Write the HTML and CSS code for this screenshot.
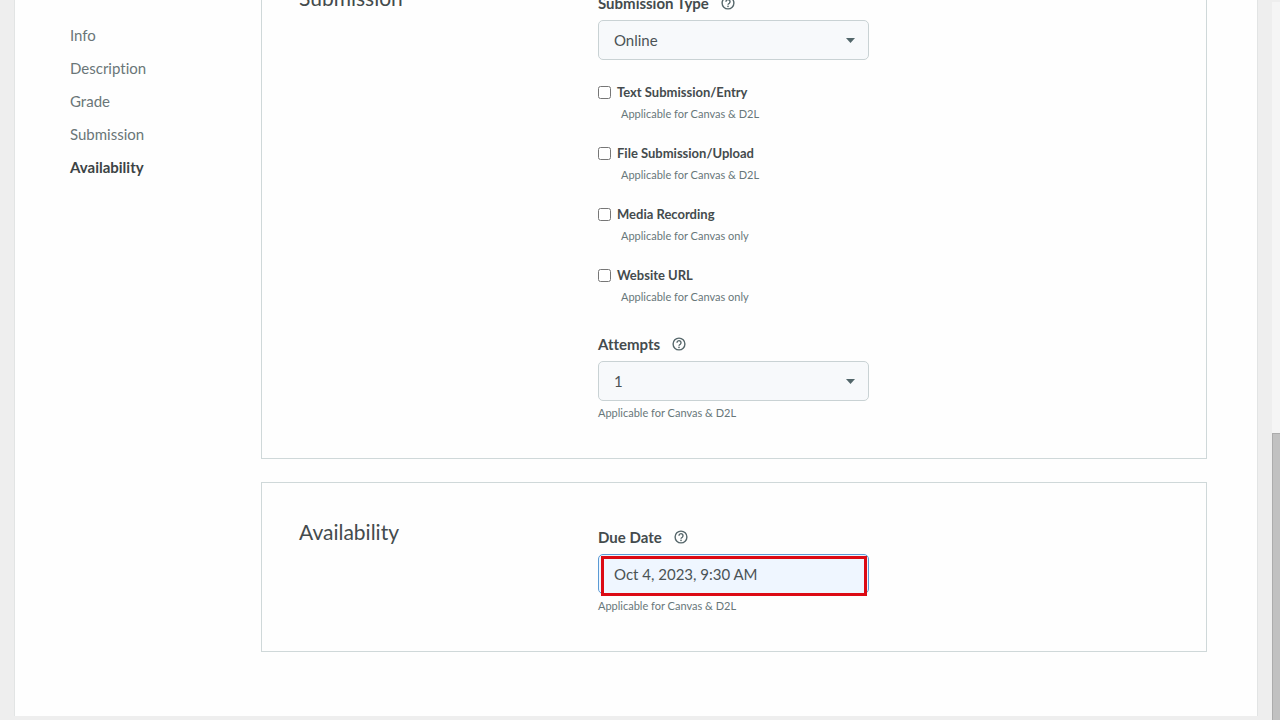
FILE: index.html
```html
<!DOCTYPE html>
<html lang="en">
<head>
	<meta charset="utf-8">
	<title>Assignment</title>
	<link rel="stylesheet" href="styles.css">
</head>
<body>
	<!-- help icon shared by the field labels -->
	<svg class="sprite" aria-hidden="true">
		<symbol id="help" viewBox="0 0 14 14">
			<circle cx="7" cy="7" r="5.9" fill="none" stroke="currentColor" stroke-width="1.4"/>
			<path d="M5 5.7a2 2 0 1 1 3.3 1.5C7.5 7.8 7 8 7 8.8" fill="none" stroke="currentColor" stroke-width="1.4"/>
			<circle cx="7" cy="10.4" r="0.8" fill="currentColor"/>
		</symbol>
	</svg>
	<div class="view">
		<main class="sheet">
			<nav class="sidenav">
				<a href="#info">Info</a>
				<a href="#description">Description</a>
				<a href="#grade">Grade</a>
				<a href="#submission">Submission</a>
				<a href="#availability" class="active">Availability</a>
			</nav>
			<form class="sections">
				<section class="panel" id="submission">
					<h2>Submission</h2>
					<div class="fields">
						<div class="field">
							<div class="field-label">
								<label for="type">Submission Type</label>
								<button type="button" class="help" aria-label="Help"><svg><use href="#help"/></svg></button>
							</div>
							<select id="type" class="control">
								<option>Online</option>
							</select>
						</div>
						<div class="checks">
							<div class="check">
								<label><input type="checkbox">Text Submission/Entry</label>
								<p class="hint">Applicable for Canvas &amp; D2L</p>
							</div>
							<div class="check">
								<label><input type="checkbox">File Submission/Upload</label>
								<p class="hint">Applicable for Canvas &amp; D2L</p>
							</div>
							<div class="check">
								<label><input type="checkbox">Media Recording</label>
								<p class="hint">Applicable for Canvas only</p>
							</div>
							<div class="check">
								<label><input type="checkbox">Website URL</label>
								<p class="hint">Applicable for Canvas only</p>
							</div>
						</div>
						<div class="field">
							<div class="field-label">
								<label for="attempts">Attempts</label>
								<button type="button" class="help" aria-label="Help"><svg><use href="#help"/></svg></button>
							</div>
							<select id="attempts" class="control">
								<option>1</option>
							</select>
							<p class="hint">Applicable for Canvas &amp; D2L</p>
						</div>
					</div>
				</section>
				<section class="panel" id="availability">
					<h2>Availability</h2>
					<div class="fields">
						<div class="field">
							<div class="field-label">
								<label for="due">Due Date</label>
								<button type="button" class="help" aria-label="Help"><svg><use href="#help"/></svg></button>
							</div>
							<div class="marked">
								<input type="text" id="due" class="control current" value="Oct 4, 2023, 9:30 AM">
							</div>
							<p class="hint">Applicable for Canvas &amp; D2L</p>
						</div>
					</div>
				</section>
			</form>
		</main>
		<div class="scrollbar"><div class="thumb"></div></div>
	</div>
</body>
</html>
```

FILE: styles.css
```css
* {
	box-sizing: border-box;
	margin: 0;
	padding: 0;
}

body {
	background-color: #eee;
	color: #444b4d;
	font-family: Lato, "Liberation Sans", sans-serif;
	font-size: 15px;
	font-variant-ligatures: none;
	line-height: 20px;
}

.sprite {
	display: none;
}

.view {
	display: flex;
	height: 100vh;
	overflow: hidden;
}

.sheet {
	flex: 1;
	display: flex;
	align-items: flex-start;
	margin: 0 14px 4px 14px;
	padding-right: 50px;
	border: 1px solid #e2e4e4;
	border-width: 0 1px;
	background-color: #fefefe;
}

.sidenav {
	display: flex;
	flex-direction: column;
	gap: 13px;
	width: 246px;
	padding: 25px 0 0 55px;
}

.sidenav a {
	color: #6a7678;
	text-decoration: none;
}

.sidenav .active {
	color: #3c4345;
	font-weight: bold;
}

.sections {
	flex: 1;
	display: flex;
	flex-direction: column;
	gap: 23px;
	/* scrolled part way into the submission panel */
	margin-top: -52px;
}

.panel {
	display: grid;
	grid-template-columns: 299px 1fr;
	padding: 44px 37px 37px;
	border: 1px solid #cfd8d9;
}

.panel h2 {
	font-size: 21px;
	font-weight: normal;
	line-height: 10px;
}

.fields {
	max-width: 271px;
}

.field-label {
	display: flex;
	align-items: center;
	gap: 12px;
	margin-bottom: 7px;
	font-weight: bold;
}

.help {
	display: flex;
	border: 0;
	background: none;
	color: #56676b;
}

.help svg {
	width: 14px;
	height: 14px;
}

.control {
	display: block;
	width: 100%;
	height: 40px;
	padding: 0 15px;
	border: 1px solid #c9d2d4;
	border-radius: 5px;
	background-color: #f7f9fb;
	color: #4b5355;
	font: inherit;
}

select.control {
	appearance: none;
	background-image: url("data:image/svg+xml,%3Csvg xmlns='http://www.w3.org/2000/svg' viewBox='0 0 9 5'%3E%3Cpath d='M0 0h9L4.5 5z' fill='%2352666a'/%3E%3C/svg%3E");
	background-position: right 13px center;
	background-repeat: no-repeat;
	background-size: 9px 5px;
}

.control.current {
	border-color: #5b9bd5;
	background-color: #eff6ff;
}

.marked {
	position: relative;
}

.marked::after {
	content: "";
	position: absolute;
	top: 2px;
	right: 2px;
	bottom: -2px;
	left: 3px;
	border: 3px solid #dc0a14;
	pointer-events: none;
}

.hint {
	margin-top: 4px;
	color: #68777a;
	font-size: 11px;
	line-height: 16px;
}

.checks {
	display: flex;
	flex-direction: column;
	gap: 21px;
	margin: 22px 0 29px;
}

.check label {
	display: flex;
	align-items: center;
	gap: 6px;
	font-size: 13px;
	font-weight: bold;
}

.check input {
	width: 13px;
	height: 13px;
}

.check .hint {
	padding-left: 23px;
}

.scrollbar {
	display: flex;
	flex-direction: column;
	justify-content: flex-end;
	width: 8px;
	margin-top: 2px;
	background-color: #f5f5f5;
}

.thumb {
	height: 40%;
	border: 1px solid #acacac;
	border-width: 1px 0 0 1px;
	background-color: #c1c1c1;
}
```
